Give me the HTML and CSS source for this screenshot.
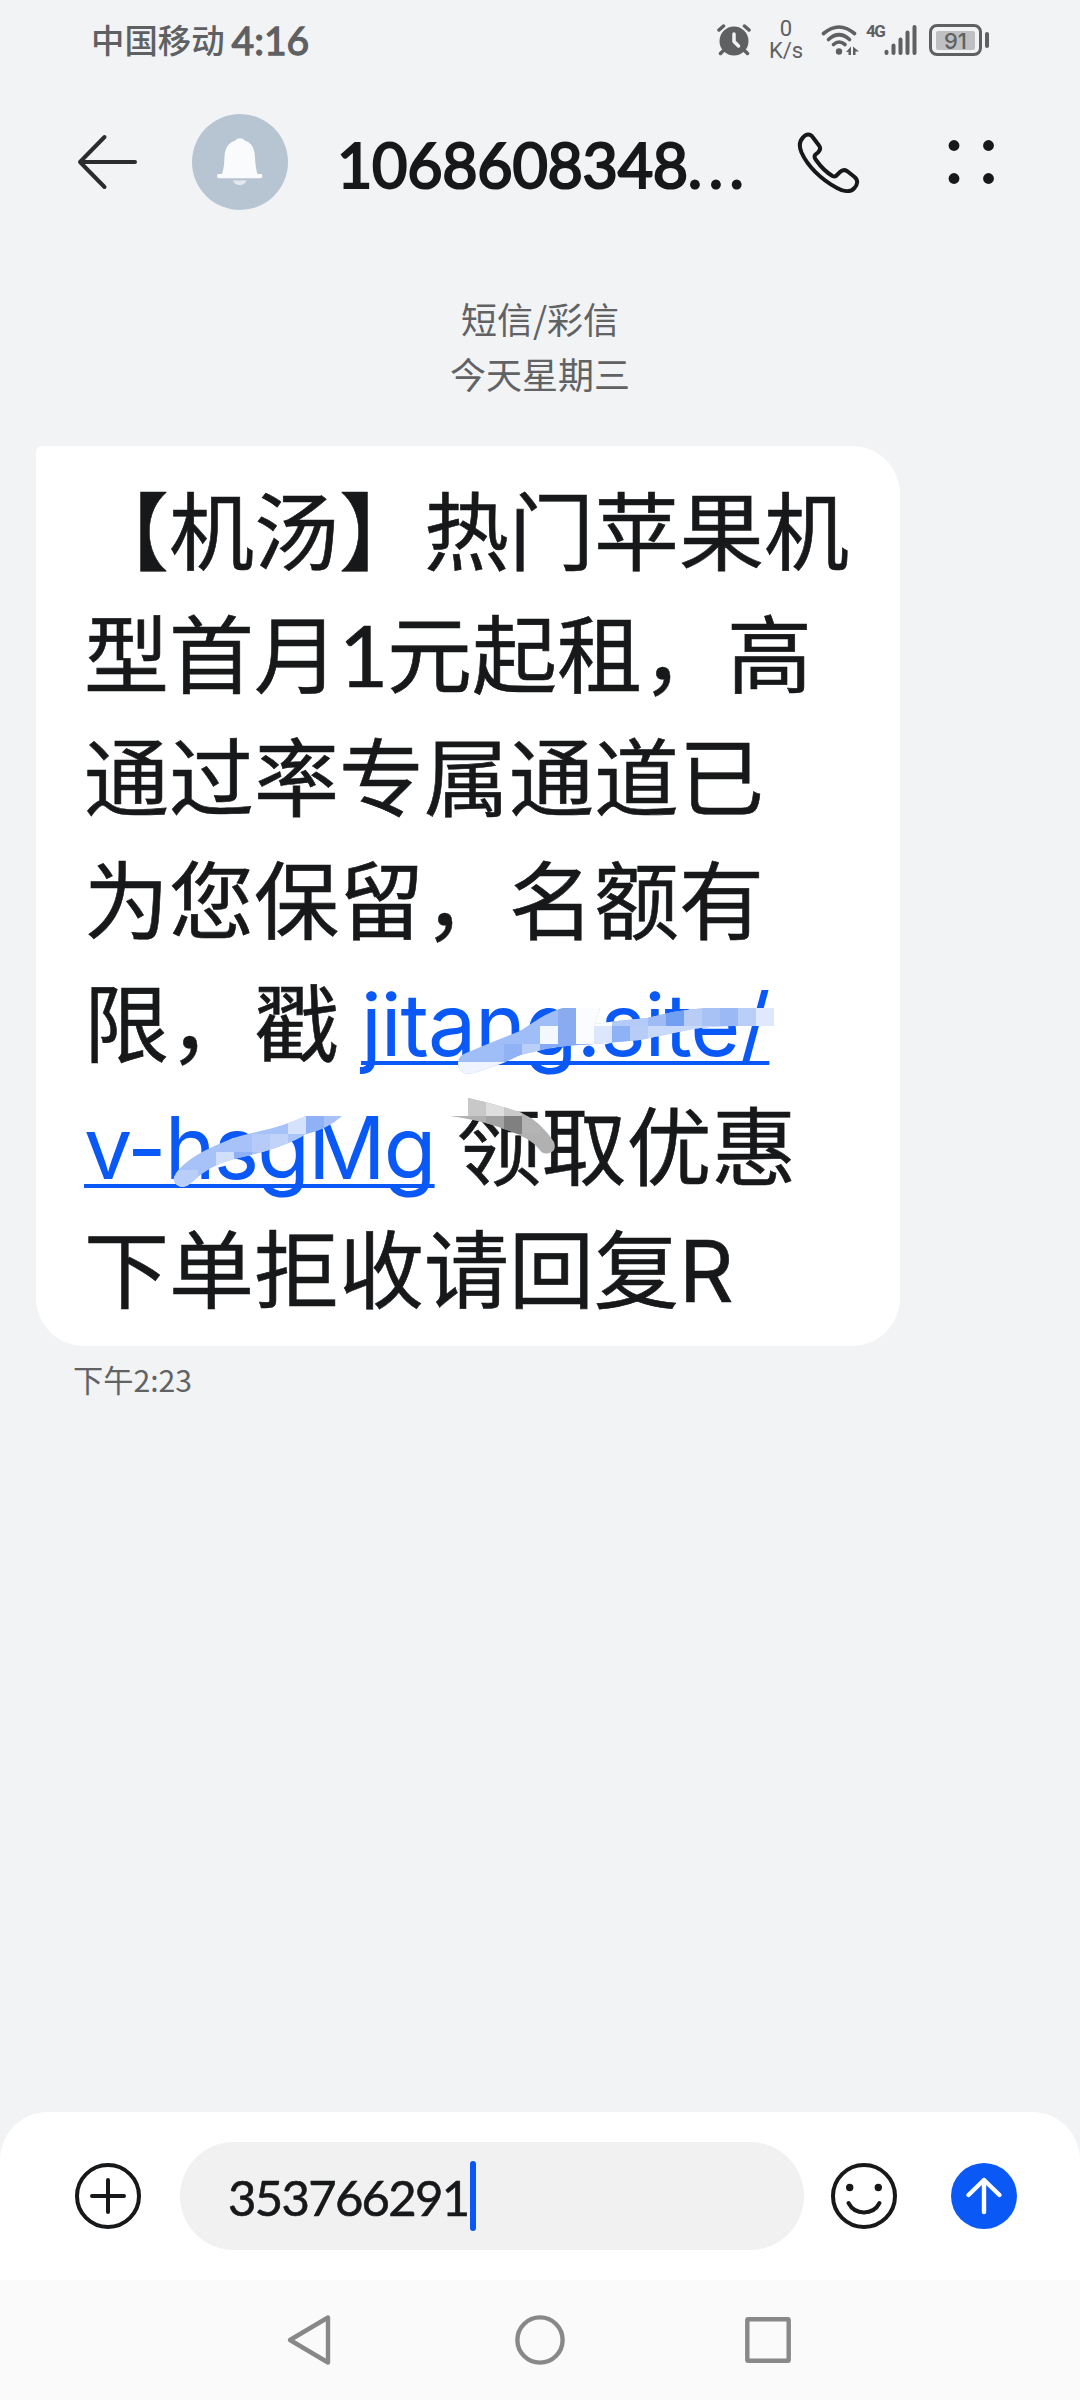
FILE: index.html
```html
<!DOCTYPE html>
<html lang="zh-CN">
<head>
    <meta charset="UTF-8">
    <meta name="viewport" content="width=device-width, initial-scale=1.0">
    <title>短信</title>
    <link rel="stylesheet" href="styles.css">
</head>
<body>
    <div class="screen">
        <div class="status-bar">
            <span class="carrier">中国移动</span>
            <span class="time">4:16</span>
            <div class="status-icons">
                <svg class="alarm" width="34" height="32" viewBox="0 0 34 32">
                    <circle cx="17" cy="17" r="14.5" fill="#5f6062"/>
                    <path d="M2 6L6.500 2M32 6L27.500 2M6 27L3.500 29.500M28 27L30.500 29.500" stroke="#5f6062" stroke-width="3.500" stroke-linecap="round"/>
                    <path d="M17 10V17.500L21.500 22" fill="none" stroke="#f1f3f5" stroke-width="3.500" stroke-linecap="round" stroke-linejoin="round"/>
                </svg>
                <div class="speed"><span>0</span><span>K/s</span></div>
                <svg class="wifi" width="40" height="32" viewBox="0 0 40 32">
                    <g fill="none" stroke="#5f6062" stroke-width="3.600" stroke-linecap="round">
                        <path d="M2.500 9.500Q18 -3.500 33.500 9.500"/>
                        <path d="M7.500 15.500Q18 6 28.500 15.500"/>
                        <path d="M12.500 20.500Q18 15.500 24 20.500"/>
                    </g>
                    <circle cx="18" cy="27.500" r="3.200" fill="#5f6062"/>
                    <path d="M25 28L30 22.500V31H27.500V28ZM32 22.500L38 27.500H34.500V31H32Z" fill="#5f6062"/>
                </svg>
                <span class="net">4G</span>
                <svg class="signal" width="34" height="32" viewBox="0 0 34 32" stroke="#5f6062" stroke-width="4" stroke-linecap="round">
                    <path d="M2.500 27.800V29M9.500 21.500V29M16.500 15.500V29M23.500 8.500V29M30.500 3V29"/>
                </svg>
                <div class="battery"><span class="level">91</span></div>
                <span class="battery-tip"></span>
            </div>
        </div>

        <div class="header">
            <svg class="back" width="62" height="58" viewBox="0 0 62 58" fill="none" stroke="#2b2c2e" stroke-width="4" stroke-linecap="round" stroke-linejoin="round">
                <path d="M28.500 4L4 29L28.500 54M4 29H59"/>
            </svg>
            <svg class="avatar" width="96" height="96" viewBox="0 0 96 96">
                <circle cx="48" cy="48" r="48" fill="#b7c4d1"/>
                <path d="M27 60H30Q32 55 32.500 43C33 34 36 29 43.500 26.500C45 23.500 51 23.500 52.500 26.500C60 29 62.500 34 63 43Q63.500 55 65.500 60H68.500Q70.500 60 70.500 62T68.500 64.300H27Q25 64.300 25 62T27 60Z" fill="#fafbfc"/>
                <path d="M41 66.500H54.500A7 6 0 0 1 41 66.500Z" fill="#e4eaf0"/>
            </svg>
            <h1 class="title">1068608348<span class="dots">...</span></h1>
            <svg class="phone" width="64" height="64" viewBox="0 0 64 64" fill="none" stroke="#17181a" stroke-width="4" stroke-linejoin="round">
                <path d="M6 7.500C9 3.500 13.500 3.500 16 7.500L22 15.500C24 18 23 20.500 21 22.500L18.500 24.500C17 26 17.500 28 19 30C24 37 29.500 42.500 35.500 46C37.500 47 39 46.500 40.500 44.500L43 42C45 40 47.500 39.500 50 41L57 46.500C61.500 50 61 54.500 57 58.500C53 62.500 46 61.500 40 58C24 49.500 10.500 36 4.500 22.500C2 16.500 2 11.500 6 7.500Z"/>
            </svg>
            <svg class="more" width="46" height="46" viewBox="0 0 46 46" fill="#17181a">
                <circle cx="6" cy="6.500" r="5.400"/><circle cx="40.500" cy="6.500" r="5.400"/>
                <circle cx="6" cy="39.500" r="5.400"/><circle cx="40.500" cy="39.500" r="5.400"/>
            </svg>
        </div>

        <div class="messages">
            <div class="day">
                <div>短信/彩信</div>
                <div>今天星期三</div>
            </div>
            <div class="bubble">
                <div class="line">【机汤】热门苹果机</div>
                <div class="line">型首月<span class="one">1</span>元起租，高</div>
                <div class="line">通过率专属通道已</div>
                <div class="line">为您保留，名额有</div>
                <div class="line">限，戳<a class="link link-a">jitang.site/</a></div>
                <div class="line"><a class="link link-b">v-hsgMg</a>领取优惠</div>
                <div class="line">下单拒收请回复<span class="latin">R</span></div>

                <!-- mosaic brush strokes over the link -->
                <svg class="mosaic" viewBox="36 446 864 900" width="864" height="900">
                    <clipPath id="brush-a">
                        <path d="M458 1063Q458 1056 466 1053L490 1043L520 1031L540 1018Q552 1011 563 1008H600L595 1024L617 1021L647 1018L673 1012Q690 1009 707 1008H774V1026H733Q712 1026 693 1029L640 1040L595 1044Q570 1045 550 1048L520 1055L503 1063L480 1071Q470 1075 464 1073Q458 1070 458 1063Z"/>
                    </clipPath>
                    <g clip-path="url(#brush-a)" shape-rendering="crispEdges">
                        <rect x="450" y="1000" width="330" height="80" fill="#9fbdf7"/>
                        <rect x="558" y="1008" width="18" height="18" fill="#8aabf0"/>
                        <rect x="576" y="1008" width="36" height="18" fill="#fafcff"/>
                        <rect x="612" y="1008" width="36" height="18" fill="#b4caf7"/>
                        <rect x="648" y="1008" width="18" height="18" fill="#9ebbf6"/>
                        <rect x="666" y="1008" width="18" height="18" fill="#71a0f3"/>
                        <rect x="684" y="1008" width="18" height="18" fill="#b8ccf6"/>
                        <rect x="702" y="1008" width="18" height="18" fill="#a9c2f5"/>
                        <rect x="720" y="1008" width="18" height="18" fill="#9ab9f5"/>
                        <rect x="738" y="1008" width="18" height="18" fill="#b9cff8"/>
                        <rect x="756" y="1008" width="18" height="18" fill="#dfe8fc"/>
                        <rect x="540" y="1026" width="18" height="18" fill="#f3f7fe"/>
                        <rect x="558" y="1026" width="18" height="18" fill="#88abf1"/>
                        <rect x="576" y="1026" width="18" height="18" fill="#fafcff"/>
                        <rect x="594" y="1026" width="18" height="18" fill="#dce7fd"/>
                        <rect x="612" y="1026" width="18" height="18" fill="#8fb2f6"/>
                        <rect x="630" y="1026" width="18" height="18" fill="#b7cdf8"/>
                        <rect x="648" y="1026" width="126" height="18" fill="#c9d9fa"/>
                        <rect x="504" y="1044" width="18" height="18" fill="#91b3f6"/>
                        <rect x="522" y="1044" width="18" height="18" fill="#b9cff9"/>
                        <rect x="540" y="1044" width="54" height="18" fill="#85abf4"/>
                        <rect x="450" y="1062" width="60" height="18" fill="#eff4fe"/>
                    </g>
                    <clipPath id="brush-b">
                        <path d="M174 1177Q180 1164 204 1151Q232 1137 252 1133Q282 1127 306 1116H342Q328 1129 306 1134Q282 1149 234 1159Q210 1165 192 1182Q184 1190 177 1185Q173 1182 174 1177Z"/>
                    </clipPath>
                    <g clip-path="url(#brush-b)" shape-rendering="crispEdges">
                        <rect x="170" y="1110" width="180" height="80" fill="#a6c2f8"/>
                        <rect x="306" y="1116" width="18" height="18" fill="#8fb1f5"/>
                        <rect x="288" y="1116" width="18" height="18" fill="#d5e2fc"/>
                        <rect x="252" y="1134" width="18" height="18" fill="#b6cbf7"/>
                        <rect x="270" y="1134" width="18" height="18" fill="#c1d3f9"/>
                        <rect x="288" y="1134" width="18" height="18" fill="#aac5f8"/>
                        <rect x="216" y="1152" width="18" height="18" fill="#d0dffb"/>
                        <rect x="234" y="1152" width="18" height="18" fill="#8fb1f5"/>
                        <rect x="170" y="1170" width="28" height="20" fill="#b9cff9"/>
                    </g>
                    <clipPath id="brush-c">
                        <path d="M468 1098Q496 1104 522 1113Q542 1123 554 1142Q557 1151 549 1153Q543 1155 539 1149Q529 1137 504 1129Q485 1121 450 1116H468Z"/>
                    </clipPath>
                    <g clip-path="url(#brush-c)" shape-rendering="crispEdges">
                        <rect x="450" y="1090" width="110" height="70" fill="#b1b1b1"/>
                        <rect x="468" y="1098" width="18" height="18" fill="#c8c8c8"/>
                        <rect x="486" y="1098" width="18" height="18" fill="#dedede"/>
                        <rect x="504" y="1098" width="18" height="18" fill="#c9c9c9"/>
                        <rect x="486" y="1116" width="18" height="18" fill="#a3a3a3"/>
                        <rect x="504" y="1116" width="18" height="18" fill="#808080"/>
                        <rect x="522" y="1116" width="18" height="18" fill="#b4b4b4"/>
                    </g>
                </svg>
            </div>
            <div class="sent-time">下午<span>2:23</span></div>
        </div>

        <div class="composer">
            <svg class="add" width="66" height="66" viewBox="0 0 66 66" fill="none" stroke="#17181a" stroke-width="4" stroke-linecap="round">
                <circle cx="33" cy="33" r="31"/>
                <path d="M33 17V49M17 33H49"/>
            </svg>
            <div class="field"><span>353766291</span><i class="caret"></i></div>
            <svg class="emoji" width="66" height="66" viewBox="0 0 66 66" fill="none" stroke="#17181a" stroke-width="4" stroke-linecap="round">
                <circle cx="33" cy="33" r="31"/>
                <path d="M17.500 40C24 52.500 42 52.500 48.500 40"/>
                <circle cx="18.700" cy="24.500" r="3.700" fill="#17181a" stroke="none"/>
                <circle cx="47.300" cy="24.500" r="3.700" fill="#17181a" stroke="none"/>
            </svg>
            <svg class="send" width="66" height="66" viewBox="0 0 66 66" fill="none" stroke="#fff" stroke-width="4.400" stroke-linecap="round" stroke-linejoin="round">
                <circle cx="33" cy="33" r="33" fill="#0a59f7" stroke="none"/>
                <path d="M33 49V17M17.500 32L33 17L48.500 32"/>
            </svg>
        </div>

        <div class="nav-bar">
            <svg width="50" height="52" viewBox="0 0 50 52" fill="none" stroke="#888" stroke-width="4.400" stroke-linejoin="round">
                <path d="M43 3.500V48.500L5 26Z"/>
            </svg>
            <svg width="50" height="50" viewBox="0 0 50 50" fill="none" stroke="#888" stroke-width="4.400">
                <circle cx="25" cy="25" r="22.600"/>
            </svg>
            <svg width="46" height="46" viewBox="0 0 46 46" fill="none" stroke="#888" stroke-width="4.400" stroke-linejoin="round">
                <rect x="2.300" y="2.300" width="41.400" height="41.400" rx="1"/>
            </svg>
        </div>
    </div>
</body>
</html>
```

FILE: styles.css
```css
* {
    box-sizing: border-box;
}

body {
    margin: 0;
    background-color: #f1f3f5;
    font-family: "Noto Sans CJK SC", sans-serif;
    color: #17181a;
}

svg {
    display: block;
    flex-shrink: 0;
}

.screen {
    width: 1080px;
    height: 2400px;
    display: flex;
    flex-direction: column;
}

/* status bar */
.status-bar {
    display: flex;
    align-items: center;
    height: 80px;
    padding: 0 91px 0 91px;
    color: #5f6062;
}

.carrier {
    font-size: 33.4px;
    font-weight: 500;
    line-height: 78px;
    margin-top: -2px;
}

.time {
    margin-left: 7px;
    font-family: Lato, sans-serif;
    font-size: 39px;
    font-weight: 400;
    line-height: 82px;
    -webkit-text-stroke: 1.3px #5f6062;
}

.status-icons {
    display: flex;
    align-items: center;
    margin-left: auto;
    height: 80px;
}

.speed {
    display: flex;
    flex-direction: column;
    align-items: center;
    width: 38px;
    margin-left: 16px;
    font-family: Roboto, sans-serif;
    font-size: 22px;
    line-height: 22px;
}

.speed span {
    height: 22px;
}

.wifi {
    margin-left: 16px;
}

.net {
    width: 18px;
    margin: -18px 0 0 5px;
    font-family: Roboto, sans-serif;
    font-size: 17px;
    font-weight: 700;
    letter-spacing: -1.5px;
}

.battery {
    display: flex;
    margin-left: 11px;
    width: 53px;
    height: 32px;
    padding: 4px;
    border: 3px solid #5f6062;
    border-radius: 8px;
}

.level {
    flex: 0 0 39px;
    height: 19px;
    background-color: #bfc0c2;
    border-radius: 2px;
    font-family: Inter, sans-serif;
    font-size: 22px;
    font-weight: 500;
    line-height: 20px;
    text-align: center;
}

.battery-tip {
    width: 4px;
    height: 16px;
    margin-left: 3px;
    border-radius: 2px;
    background-color: #5f6062;
}

/* header */
.header {
    display: flex;
    align-items: center;
    height: 164px;
    padding-left: 76px;
}

.avatar {
    margin-left: 54px;
}

.title {
    width: 372px;
    margin: 5px 0 0 49px;
    font-family: Lato, sans-serif;
    font-size: 61px;
    font-weight: 400;
    letter-spacing: -0.3px;
    white-space: nowrap;
    -webkit-text-stroke: 2.2px #17181a;
}

.dots {
    letter-spacing: 6.5px;
}

.phone {
    margin-left: 88px;
}

.more {
    margin-left: 87px;
}

/* message list */
.messages {
    flex: 1;
    padding: 47px 36px 0;
}

.day {
    font-size: 36px;
    line-height: 55px;
    text-align: center;
    color: #606264;
}

.bubble {
    position: relative;
    width: 864px;
    height: 900px;
    margin-top: 45px;
    padding: 19px 0 0 48px;
    background-color: #fff;
    border-radius: 6px 48px 48px 48px;
}

.line {
    height: 123px;
    font-size: 85px;
    line-height: 123px;
    white-space: nowrap;
    -webkit-text-stroke: 0.6px #17181a;
}

.one {
    display: inline-block;
    width: 48px;
    font-family: Lato, sans-serif;
}

.latin {
    font-family: Inter, sans-serif;
}

.link {
    font-family: Inter, sans-serif;
    font-size: 86px;
    color: #0a59f7;
    text-decoration: underline;
    text-decoration-thickness: 4px;
    text-underline-offset: 5px;
    text-decoration-skip-ink: none;
    -webkit-text-stroke-width: 0;
}

.link-a {
    margin-left: 22px;
    letter-spacing: -1.1px;
}

.link-b {
    margin-right: 22px;
    letter-spacing: -1.9px;
}

.mosaic {
    position: absolute;
    left: 0;
    top: 0;
}

.sent-time {
    margin: 11px 0 0 37px;
    font-size: 30.2px;
    line-height: 44px;
    color: #606264;
}

/* composer */
.composer {
    display: flex;
    align-items: center;
    height: 168px;
    padding-left: 75px;
    background-color: #fff;
    border-radius: 48px 48px 0 0;
}

.field {
    display: flex;
    align-items: center;
    width: 624px;
    height: 108px;
    margin-left: 39px;
    padding-left: 48px;
    border-radius: 54px;
    background-color: #f1f1f1;
    font-family: Lato, sans-serif;
    font-size: 49px;
    letter-spacing: -1.7px;
}

.field span {
    margin-top: 2px;
    -webkit-text-stroke: 0.6px #17181a;
}

.caret {
    width: 6px;
    height: 70px;
    margin-left: 2px;
    border-radius: 3px;
    background-color: #0a59f7;
}

.emoji {
    margin-left: 27px;
}

.send {
    margin-left: 54px;
}

/* system navigation */
.nav-bar {
    display: flex;
    align-items: center;
    height: 120px;
    padding-left: 285px;
    gap: 180px;
    background-color: #fafafa;
}
```
